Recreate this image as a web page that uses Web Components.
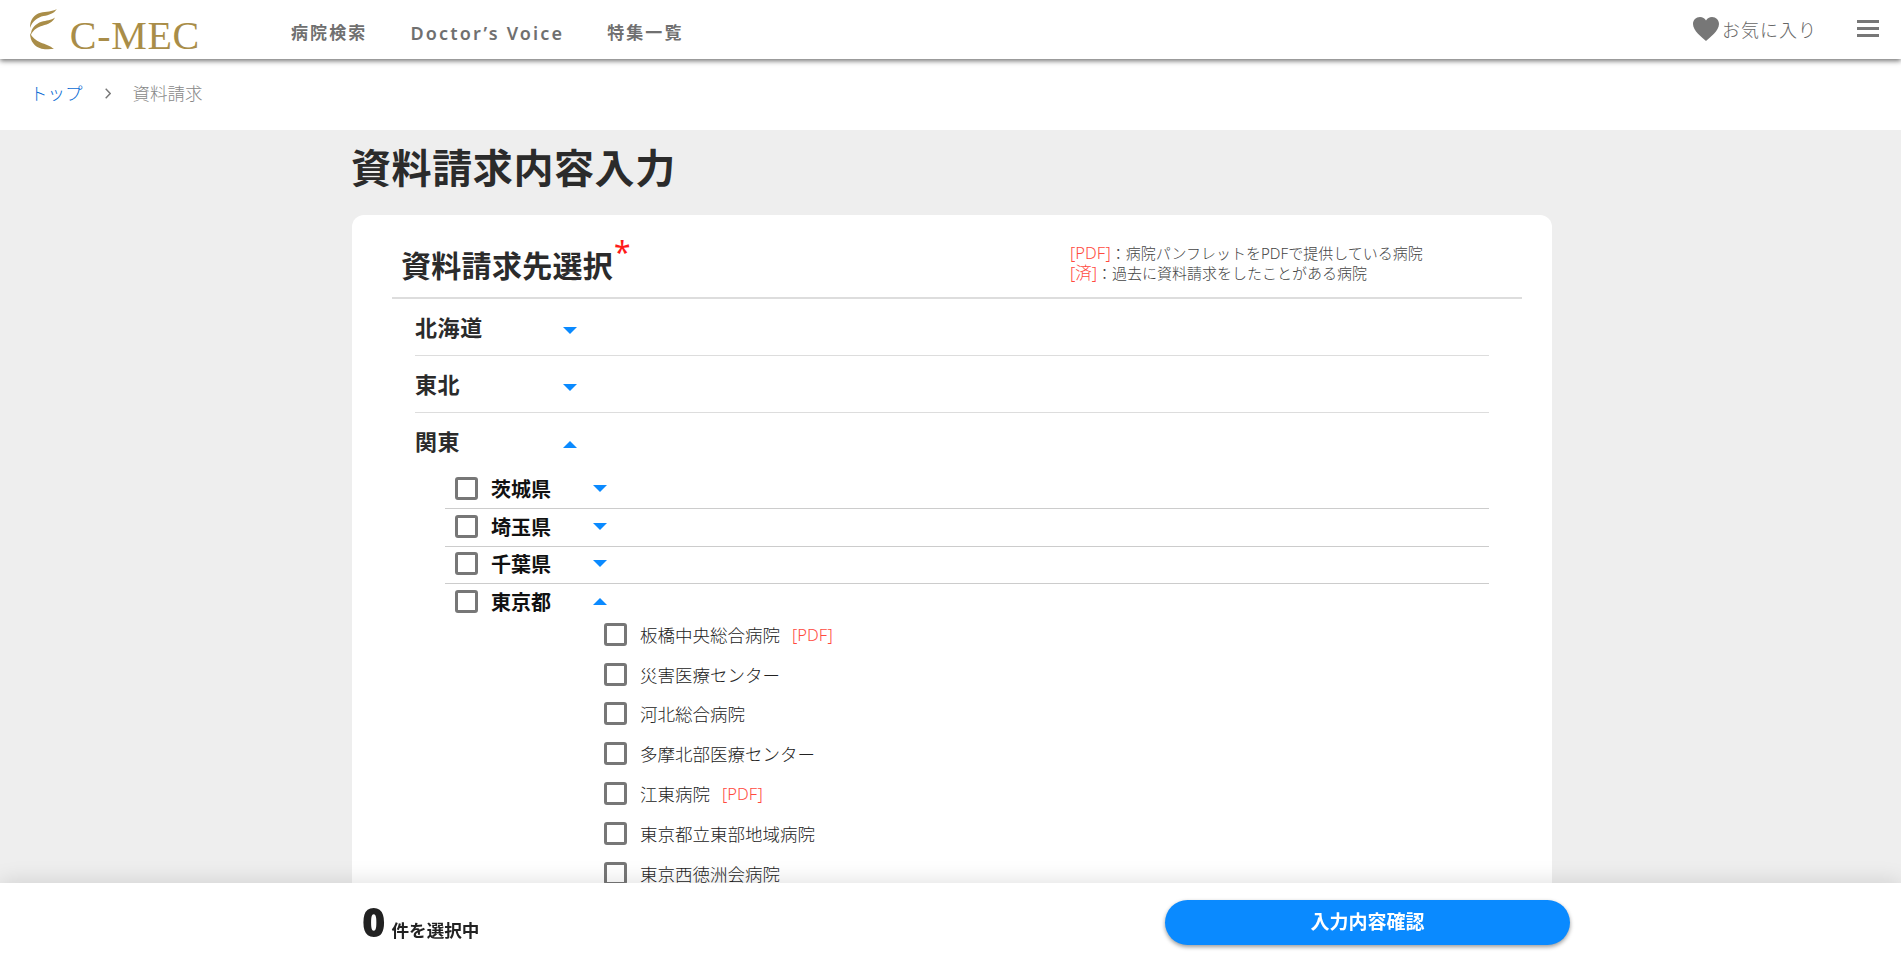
<!DOCTYPE html>
<html lang="ja">
<head>
<meta charset="utf-8">
<title>資料請求内容入力</title>
<style>
html, body {
    margin: 0;
    height: 962px;
    overflow: hidden;
    background: #eeeeee;
    font-family: "Noto Sans", "Noto Sans CJK JP", sans-serif;
    color: #333;
}
</style>
</head>
<body>

<cm-header></cm-header>
<cm-breadcrumb current="資料請求"></cm-breadcrumb>
<cm-page heading="資料請求内容入力">
    <cm-card heading="資料請求先選択">
        <cm-region label="北海道"></cm-region>
        <cm-region label="東北"></cm-region>
        <cm-region label="関東" open>
            <cm-pref label="茨城県"></cm-pref>
            <cm-pref label="埼玉県"></cm-pref>
            <cm-pref label="千葉県"></cm-pref>
            <cm-pref label="東京都" open>
                <cm-hospital label="板橋中央総合病院" pdf></cm-hospital>
                <cm-hospital label="災害医療センター"></cm-hospital>
                <cm-hospital label="河北総合病院"></cm-hospital>
                <cm-hospital label="多摩北部医療センター"></cm-hospital>
                <cm-hospital label="江東病院" pdf></cm-hospital>
                <cm-hospital label="東京都立東部地域病院"></cm-hospital>
                <cm-hospital label="東京西徳洲会病院"></cm-hospital>
            </cm-pref>
        </cm-region>
    </cm-card>
</cm-page>
<cm-footer count="0"></cm-footer>

<script>
const arrowSvg = (open) => `
    <svg class="arrow" width="14" height="7" viewBox="0 0 14 7">
        <polygon fill="#0a8aff" points="${open ? '7,0 14,7 0,7' : '0,0 14,0 7,7'}"/>
    </svg>`;

class CmHeader extends HTMLElement {
    constructor() {
        super();
        this.attachShadow({ mode: 'open' });
    }
    connectedCallback() {
        this.shadowRoot.innerHTML = `
        <style>
        :host {
            display: flex;
            align-items: center;
            height: 59px;
            background: #fff;
            box-shadow: 0 2px 5px rgba(0,0,0,.55);
            position: relative;
            z-index: 2;
            padding: 0 22px 0 30px;
        }
        .logo {
            display: flex;
            align-items: flex-end;
            width: 170px;
            height: 44px;
            margin-top: -2px;
            gap: 13px;
        }
        .logo span {
            font-family: "Liberation Serif", serif;
            font-size: 40px;
            letter-spacing: .7px;
            line-height: 30px;
            height: 30px;
            color: #a98d48;
            white-space: nowrap;
        }
        nav {
            display: flex;
            align-items: center;
            gap: 43px;
            margin-left: 91px;
            margin-top: 7px;
        }
        nav a {
            font-size: 17px;
            line-height: 24px;
            font-weight: 700;
            color: #707070;
            letter-spacing: 2.100px;
            white-space: nowrap;
        }
        nav a.latin {
            font-size: 18px;
            letter-spacing: 2.150px;
            font-weight: 600;
        }
        .fav {
            margin-left: auto;
            display: flex;
            align-items: center;
            gap: 3px;
            color: #666;
            font-size: 18px;
            font-weight: 300;
            letter-spacing: 1px;
            margin-top: -1px;
        }
        .menu {
            display: flex;
            flex-direction: column;
            gap: 4px;
            width: 22px;
            margin-left: 40px;
            margin-top: -3px;
        }
        .menu i {
            display: block;
            height: 3px;
            background: #777;
        }
        </style>
        <div class="logo">
            <svg width="28" height="42.500" viewBox="0 0 28 42.500">
                <path fill="#a98d48" d="M28 0C23 3 17 2.500 11 4C4 6 0 11 0 20C3 12 8 9 14 7.500C20 6 25 5 28 0Z"/>
                <path fill="#a98d48" d="M26 9C22 12 17 12 12 13.500C6 15.500 1 20 1 27C4 21 8 19 13 17.500C19 16 24 14 26 9Z"/>
                <path fill="#a98d48" d="M0 25C0 34 5 40 12 41.500C17 42.500 21 42 25 42C21 38 16 37 11 35C6 33 2 30 0 25Z"/>
            </svg>
            <span>C-MEC</span>
        </div>
        <nav>
            <a>病院検索</a>
            <a class="latin">Doctor’s Voice</a>
            <a>特集一覧</a>
        </nav>
        <div class="fav">
            <svg width="26" height="24" viewBox="0 0 26 24">
                <path fill="#777" d="M13 24C9 20 0 14 0 7C0 3 3 0 7 0C9.600 0 11.800 1.300 13 3.400C14.200 1.300 16.400 0 19 0C23 0 26 3 26 7C26 14 17 20 13 24Z"/>
            </svg>
            <span>お気に入り</span>
        </div>
        <div class="menu"><i></i><i></i><i></i></div>
        `;
    }
}
customElements.define('cm-header', CmHeader);

class CmBreadcrumb extends HTMLElement {
    constructor() {
        super();
        this.attachShadow({ mode: 'open' });
    }
    connectedCallback() {
        this.shadowRoot.innerHTML = `
        <style>
        :host {
            display: flex;
            align-items: center;
            height: 71px;
            padding: 0 0 4px 30px;
            box-sizing: border-box;
            background: #fff;
            font-size: 17.500px;
            font-weight: 300;
        }
        a { color: #0b6cd4; }
        svg { margin: 2px 22px 0 22px; }
        .cur { color: #888; }
        </style>
        <a>トップ</a>
        <svg width="6" height="11" viewBox="0 0 6 11"><polyline points="0.700,0.700 5.200,5.500 0.700,10.300" fill="none" stroke="#777" stroke-width="1.400"/></svg>
        <span class="cur">${this.getAttribute('current')}</span>
        `;
    }
}
customElements.define('cm-breadcrumb', CmBreadcrumb);

class CmPage extends HTMLElement {
    constructor() {
        super();
        this.attachShadow({ mode: 'open' });
    }
    connectedCallback() {
        this.shadowRoot.innerHTML = `
        <style>
        :host {
            display: block;
            width: 1200px;
            margin-left: 352px;
        }
        h1 {
            margin: 0 0 0 -1px;
            height: 85px;
            padding-bottom: 13px;
            box-sizing: border-box;
            display: flex;
            align-items: center;
            font-size: 40px;
            letter-spacing: .6px;
            font-weight: 700;
            color: #2b2b2b;
        }
        </style>
        <h1>${this.getAttribute('heading')}</h1>
        <slot></slot>
        `;
    }
}
customElements.define('cm-page', CmPage);

class CmCard extends HTMLElement {
    constructor() {
        super();
        this.attachShadow({ mode: 'open' });
    }
    connectedCallback() {
        this.shadowRoot.innerHTML = `
        <style>
        :host {
            display: block;
            background: #fff;
            border-radius: 12px;
            padding: 0 30px 60px 40px;
        }
        .head {
            display: grid;
            grid-template-columns: 669px 1fr;
            align-items: center;
            height: 84px;
            box-sizing: border-box;
            padding-left: 9px;
            border-bottom: 2px solid #ddd;
        }
        h2 {
            margin: 16px 0 0;
            font-size: 30px;
            font-weight: 700;
            color: #2b2b2b;
            letter-spacing: .3px;
            white-space: nowrap;
        }
        h2 span {
            color: #ff1a1a;
            font-size: 30px;
            font-weight: 400;
            line-height: 0;
            vertical-align: 14px;
            margin-left: 1px;
        }
        .legend {
            font-size: 15px;
            line-height: 20px;
            color: #444;
            font-weight: 300;
            margin-top: 13px;
        }
        .legend b {
            font-weight: 300;
            font-size: 16.500px;
            color: #ff4a3e;
        }
        .list {
            margin: 0 33px 0 23px;
        }
        </style>
        <div class="head">
            <h2>${this.getAttribute('heading')}<span>*</span></h2>
            <div class="legend">
                <div><b>[PDF]</b>：病院パンフレットをPDFで提供している病院</div>
                <div><b>[済]</b>：過去に資料請求をしたことがある病院</div>
            </div>
        </div>
        <div class="list"><slot></slot></div>
        `;
    }
}
customElements.define('cm-card', CmCard);

class CmRegion extends HTMLElement {
    constructor() {
        super();
        this.attachShadow({ mode: 'open' });
    }
    connectedCallback() {
        const open = this.hasAttribute('open');
        this.shadowRoot.innerHTML = `
        <style>
        :host { display: block; }
        .row {
            display: flex;
            align-items: center;
            height: 57px;
            box-sizing: border-box;
            padding: 0 0 2px 0;
            border-bottom: 1px solid #ddd;
            font-size: 22px;
            letter-spacing: .6px;
            font-weight: 700;
            color: #2b2b2b;
        }
        :host([open]) .row {
            border-bottom: 0;
            height: 58.500px;
            padding-bottom: 4px;
        }
        .label { width: 148px; }
        .arrow { margin-top: 8px; }
        .sub { margin-left: 30px; }
        </style>
        <div class="row">
            <span class="label">${this.getAttribute('label')}</span>
            ${arrowSvg(open)}
        </div>
        <div class="sub"><slot></slot></div>
        `;
    }
}
customElements.define('cm-region', CmRegion);

class CmPref extends HTMLElement {
    constructor() {
        super();
        this.attachShadow({ mode: 'open' });
    }
    connectedCallback() {
        const open = this.hasAttribute('open');
        this.shadowRoot.innerHTML = `
        <style>
        :host { display: block; }
        .row {
            display: flex;
            align-items: center;
            height: 37.500px;
            box-sizing: border-box;
            padding: 0 0 2px 10px;
            border-bottom: 1px solid #ccc;
            font-size: 20px;
            font-weight: 700;
            color: #111;
        }
        :host([open]) .row {
            border-bottom: 0;
            height: 30.500px;
            padding-top: 4px;
            padding-bottom: 0;
        }
        .box {
            width: 23px;
            height: 23px;
            box-sizing: border-box;
            border: 3px solid #777;
            border-radius: 3px;
            margin-right: 13px;
        }
        .label { width: 102px; }
        .list { margin-left: 159px; }
        </style>
        <div class="row">
            <span class="box"></span>
            <span class="label">${this.getAttribute('label')}</span>
            ${arrowSvg(open)}
        </div>
        <div class="list"><slot></slot></div>
        `;
    }
}
customElements.define('cm-pref', CmPref);

class CmHospital extends HTMLElement {
    constructor() {
        super();
        this.attachShadow({ mode: 'open' });
    }
    connectedCallback() {
        this.shadowRoot.innerHTML = `
        <style>
        :host {
            display: flex;
            align-items: center;
            height: 39.800px;
            font-size: 17.500px;
            font-weight: 300;
            color: #222;
        }
        .box {
            width: 23px;
            height: 23px;
            box-sizing: border-box;
            border: 3px solid #777;
            border-radius: 3px;
            margin-right: 13px;
        }
        .pdf {
            color: #ff4a3e;
            font-size: 16.500px;
            margin-left: 12px;
        }
        </style>
        <span class="box"></span>
        <span>${this.getAttribute('label')}</span>
        ${this.hasAttribute('pdf') ? '<span class="pdf">[PDF]</span>' : ''}
        `;
    }
}
customElements.define('cm-hospital', CmHospital);

class CmFooter extends HTMLElement {
    constructor() {
        super();
        this.attachShadow({ mode: 'open' });
    }
    connectedCallback() {
        this.shadowRoot.innerHTML = `
        <style>
        :host {
            display: block;
            position: fixed;
            left: 0;
            right: 0;
            bottom: 0;
            height: 79px;
            background: #fff;
            box-shadow: 0 0 22px rgba(0,0,0,.14);
        }
        .inner {
            display: flex;
            align-items: center;
            justify-content: space-between;
            height: 100%;
            box-sizing: border-box;
            margin-left: 362px;
            width: 1208px;
        }
        .count {
            display: flex;
            align-items: baseline;
            gap: 6px;
            font-size: 17.600px;
            font-weight: 700;
            color: #222;
            margin-top: -2px;
        }
        .count b {
            font-size: 40px;
            line-height: 1;
        }
        button {
            width: 405px;
            height: 45px;
            border: 0;
            padding: 0 0 3px;
            border-radius: 23px;
            background: #0a8aff;
            box-shadow: 0 2px 4px rgba(0,0,0,.4);
            color: #fff;
            font: 700 19px "Noto Sans", "Noto Sans CJK JP", sans-serif;
        }
        </style>
        <div class="inner">
            <div class="count"><b>${this.getAttribute('count')}</b><span>件を選択中</span></div>
            <button>入力内容確認</button>
        </div>
        `;
    }
}
customElements.define('cm-footer', CmFooter);
</script>
</body>
</html>
